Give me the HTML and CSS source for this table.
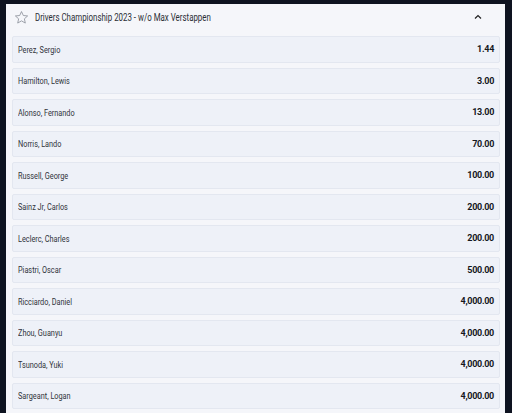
FILE: index.html
```html
<!DOCTYPE html>
<html lang="en">
  <head>
    <meta charset="UTF-8" />
    <meta name="viewport" content="width=device-width, initial-scale=1.0" />
    <title>Drivers Championship 2023</title>
    <link rel="stylesheet" href="styles.css">
  </head>
  <body>
    <div class="market">
      <div class="market_header">
        <svg class="star" width="15" height="15" viewBox="0 0 24 24">
          <path d="M12 2.5l2.9 6.3 6.9.7-5.2 4.6 1.5 6.8L12 17.4l-6.1 3.5 1.5-6.8-5.2-4.6 6.9-.7z" fill="none" stroke="#8a8f99" stroke-width="1.3" stroke-linejoin="round"/>
        </svg>
        <span class="title">Drivers Championship 2023 - w/o Max Verstappen</span>
        <svg class="chevron" width="8" height="6" viewBox="0 0 8 6">
          <path d="M1 4.5L4 1.5l3 3" fill="none" stroke="#222" stroke-width="1.2"/>
        </svg>
      </div>

      <div class="selections">
        <div class="row"><span class="name">Perez, Sergio</span><span class="odds">1.44</span></div>
        <div class="row"><span class="name">Hamilton, Lewis</span><span class="odds">3.00</span></div>
        <div class="row"><span class="name">Alonso, Fernando</span><span class="odds">13.00</span></div>
        <div class="row"><span class="name">Norris, Lando</span><span class="odds">70.00</span></div>
        <div class="row"><span class="name">Russell, George</span><span class="odds">100.00</span></div>
        <div class="row"><span class="name">Sainz Jr, Carlos</span><span class="odds">200.00</span></div>
        <div class="row"><span class="name">Leclerc, Charles</span><span class="odds">200.00</span></div>
        <div class="row"><span class="name">Piastri, Oscar</span><span class="odds">500.00</span></div>
        <div class="row"><span class="name">Ricciardo, Daniel</span><span class="odds">4,000.00</span></div>
        <div class="row"><span class="name">Zhou, Guanyu</span><span class="odds">4,000.00</span></div>
        <div class="row"><span class="name">Tsunoda, Yuki</span><span class="odds">4,000.00</span></div>
        <div class="row"><span class="name">Sargeant, Logan</span><span class="odds">4,000.00</span></div>
      </div>
    </div>
  </body>
</html>
```

FILE: styles.css
```css
* {
    margin: 0;
    padding: 0;
    box-sizing: border-box;
}

body {
    background: #0e1320;
    font-family: Roboto, "Liberation Sans", sans-serif;
    padding: 4px 7px 0 6px;
    height: 413px;
    overflow: hidden;
}

.market {
    background: #f5f6fa;
    height: 409px;
}

.market_header {
    height: 26px;
    display: flex;
    align-items: center;
    padding: 0 0 0 8px;
}

.market_header .star {
    flex: none;
}

/* condensed look of the original font */
.market_header .title {
    display: inline-block;
    margin-left: 6px;
    font-size: 10px;
    color: #2b2f36;
    transform: scaleX(0.79);
    transform-origin: left center;
}

.market_header .chevron {
    margin-left: auto;
    margin-right: 23px;
}

.selections {
    display: flex;
    flex-direction: column;
    gap: 5px;
    padding: 6px 5px 0 6px;
}

.row {
    height: 26.5px;
    display: flex;
    align-items: center;
    justify-content: space-between;
    padding: 0 5px 0 5px;
    background: #eef1f8;
    border: 1px solid #e3e7f0;
    border-radius: 2px;
}

.row .name {
    display: inline-block;
    font-size: 9.5px;
    color: #30343b;
    transform: scaleX(0.77);
    transform-origin: left center;
}

.row .odds {
    font-size: 9px;
    font-weight: bold;
    letter-spacing: -0.3px;
    color: #15181d;
}
```
